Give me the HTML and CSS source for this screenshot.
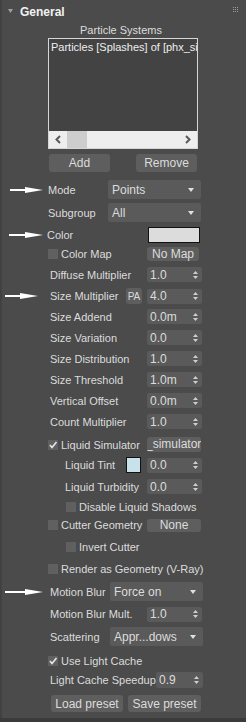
FILE: index.html
```html
<!DOCTYPE html>
<html lang="en">
<head>
  <meta charset="UTF-8">
  <title>General</title>
  <link rel="stylesheet" href="styles.css">
</head>
<body>

<div class="rollout">
  <div class="rollout-head">
    <svg class="caret" width="5" height="4" viewBox="0 0 5 4"><polygon points="0,0 5,0 2.5,4"/></svg>
    <span class="rollout-title">General</span>
    <svg class="grip" width="5" height="5" viewBox="0 0 5 5">
      <rect x="0" y="0" width="1" height="1"/><rect x="2" y="0" width="1" height="1"/><rect x="4" y="0" width="1" height="1"/>
      <rect x="0" y="2" width="1" height="1"/><rect x="2" y="2" width="1" height="1"/><rect x="4" y="2" width="1" height="1"/>
      <rect x="0" y="4" width="1" height="1"/><rect x="2" y="4" width="1" height="1"/><rect x="4" y="4" width="1" height="1"/>
    </svg>
  </div>

  <div class="caption">Particle Systems</div>
  <div class="listbox">
    <div class="list-items">
      <div class="list-item">Particles [Splashes] of [phx_simulator]</div>
    </div>
    <div class="hscroll">
      <svg class="chev" width="6" height="9" viewBox="0 0 6 9"><polyline points="5,1 1.5,4.5 5,8"/></svg>
      <span class="thumb"></span>
      <svg class="chev chev-right" width="6" height="9" viewBox="0 0 6 9"><polyline points="1,1 4.5,4.5 1,8"/></svg>
    </div>
  </div>

  <div class="btn-pair">
    <button class="btn">Add</button>
    <button class="btn btn-remove">Remove</button>
  </div>

  <div class="row tall m8">
    <svg class="pointer pointer-mode" width="33" height="8" viewBox="0 0 33 8"><rect x="0" y="3" width="17" height="2"/><polygon points="15,1 33,4 15,7"/></svg>
    <span class="lbl lbl-drop">Mode</span>
    <div class="drop">Points<svg class="drop-arrow" width="6" height="4" viewBox="0 0 6 4"><polygon points="0,0 6,0 3,4"/></svg></div>
  </div>
  <div class="row tall m4">
    <span class="lbl lbl-drop">Subgroup</span>
    <div class="drop">All<svg class="drop-arrow" width="6" height="4" viewBox="0 0 6 4"><polygon points="0,0 6,0 3,4"/></svg></div>
  </div>
  <div class="row h16 m5">
    <svg class="pointer pointer-color" width="34" height="8" viewBox="0 0 34 8"><rect x="0" y="3" width="18" height="2"/><polygon points="16,1 34,4 16,7"/></svg>
    <span class="lbl lbl-color">Color</span>
    <span class="swatch"></span>
  </div>
  <div class="row h14 m4">
    <span class="check"></span>
    <span class="lbl lbl-check">Color Map</span>
    <button class="btn btn-map">No Map</button>
  </div>
  <div class="row">
    <span class="lbl">Diffuse Multiplier</span>
    <div class="spin">1.0<svg class="spin-arrows" width="5" height="8" viewBox="0 0 5 8"><polygon points="0,3 2.5,0 5,3"/><polygon points="0,5 2.5,8 5,5"/></svg></div>
  </div>
  <div class="row h16">
    <svg class="pointer pointer-size" width="33" height="8" viewBox="0 0 33 8"><rect x="0" y="3" width="17" height="2"/><polygon points="15,1 33,4 15,7"/></svg>
    <span class="lbl lbl-pa">Size Multiplier</span>
    <button class="btn btn-pa">PA</button>
    <div class="spin">4.0<svg class="spin-arrows" width="5" height="8" viewBox="0 0 5 8"><polygon points="0,3 2.5,0 5,3"/><polygon points="0,5 2.5,8 5,5"/></svg></div>
  </div>
  <div class="row m5">
    <span class="lbl">Size Addend</span>
    <div class="spin">0.0m<svg class="spin-arrows" width="5" height="8" viewBox="0 0 5 8"><polygon points="0,3 2.5,0 5,3"/><polygon points="0,5 2.5,8 5,5"/></svg></div>
  </div>
  <div class="row">
    <span class="lbl">Size Variation</span>
    <div class="spin">0.0<svg class="spin-arrows" width="5" height="8" viewBox="0 0 5 8"><polygon points="0,3 2.5,0 5,3"/><polygon points="0,5 2.5,8 5,5"/></svg></div>
  </div>
  <div class="row">
    <span class="lbl">Size Distribution</span>
    <div class="spin">1.0<svg class="spin-arrows" width="5" height="8" viewBox="0 0 5 8"><polygon points="0,3 2.5,0 5,3"/><polygon points="0,5 2.5,8 5,5"/></svg></div>
  </div>
  <div class="row">
    <span class="lbl">Size Threshold</span>
    <div class="spin">1.0m<svg class="spin-arrows" width="5" height="8" viewBox="0 0 5 8"><polygon points="0,3 2.5,0 5,3"/><polygon points="0,5 2.5,8 5,5"/></svg></div>
  </div>
  <div class="row">
    <span class="lbl">Vertical Offset</span>
    <div class="spin">0.0m<svg class="spin-arrows" width="5" height="8" viewBox="0 0 5 8"><polygon points="0,3 2.5,0 5,3"/><polygon points="0,5 2.5,8 5,5"/></svg></div>
  </div>
  <div class="row">
    <span class="lbl">Count Multiplier</span>
    <div class="spin">1.0<svg class="spin-arrows" width="5" height="8" viewBox="0 0 5 8"><polygon points="0,3 2.5,0 5,3"/><polygon points="0,5 2.5,8 5,5"/></svg></div>
  </div>
  <div class="row m8">
    <span class="check checked"><svg width="10" height="10" viewBox="0 0 10 10"><polyline points="2,5 4,7.5 8.5,2"/></svg></span>
    <span class="lbl lbl-check">Liquid Simulator</span>
    <button class="btn btn-sim"><span>x_simulator_</span></button>
  </div>
  <div class="row h16 m5 indent-label">
    <span class="lbl lbl-tint">Liquid Tint</span>
    <span class="swatch swatch-tint"></span>
    <div class="spin">0.0<svg class="spin-arrows" width="5" height="8" viewBox="0 0 5 8"><polygon points="0,3 2.5,0 5,3"/><polygon points="0,5 2.5,8 5,5"/></svg></div>
  </div>
  <div class="row indent-label">
    <span class="lbl lbl-turb">Liquid Turbidity</span>
    <div class="spin">0.0<svg class="spin-arrows" width="5" height="8" viewBox="0 0 5 8"><polygon points="0,3 2.5,0 5,3"/><polygon points="0,5 2.5,8 5,5"/></svg></div>
  </div>
  <div class="row h14 indent">
    <span class="check"></span>
    <span class="lbl lbl-check">Disable Liquid Shadows</span>
  </div>
  <div class="row h14 m4">
    <span class="check"></span>
    <span class="lbl lbl-check">Cutter Geometry</span>
    <button class="btn btn-none">None</button>
  </div>
  <div class="row h14 m8 indent">
    <span class="check"></span>
    <span class="lbl lbl-check">Invert Cutter</span>
  </div>
  <div class="row h14 m8">
    <span class="check"></span>
    <span class="lbl lbl-check">Render as Geometry (V-Ray)</span>
  </div>
  <div class="row tall">
    <svg class="pointer pointer-blur" width="38" height="8" viewBox="0 0 38 8"><rect x="0" y="3" width="22" height="2"/><polygon points="20,1 38,4 20,7"/></svg>
    <span class="lbl lbl-drop2">Motion Blur</span>
    <div class="drop">Force on<svg class="drop-arrow" width="6" height="4" viewBox="0 0 6 4"><polygon points="0,0 6,0 3,4"/></svg></div>
  </div>
  <div class="row h16 m5">
    <span class="lbl">Motion Blur Mult.</span>
    <div class="spin">1.0<svg class="spin-arrows" width="5" height="8" viewBox="0 0 5 8"><polygon points="0,3 2.5,0 5,3"/><polygon points="0,5 2.5,8 5,5"/></svg></div>
  </div>
  <div class="row tall m5">
    <span class="lbl lbl-drop2">Scattering</span>
    <div class="drop">Appr...dows<svg class="drop-arrow" width="6" height="4" viewBox="0 0 6 4"><polygon points="0,0 6,0 3,4"/></svg></div>
  </div>
  <div class="row h14 m8">
    <span class="check checked"><svg width="10" height="10" viewBox="0 0 10 10"><polyline points="2,5 4,7.5 8.5,2"/></svg></span>
    <span class="lbl lbl-check">Use Light Cache</span>
  </div>
  <div class="row h16 m4">
    <span class="lbl lbl-lcs">Light Cache Speedup</span>
    <div class="spin spin-lcs">0.9<svg class="spin-arrows" width="5" height="8" viewBox="0 0 5 8"><polygon points="0,3 2.5,0 5,3"/><polygon points="0,5 2.5,8 5,5"/></svg></div>
  </div>
  <div class="presets">
    <button class="btn btn-preset">Load preset</button>
    <button class="btn btn-preset btn-save">Save preset</button>
  </div>
</div>

</body>
</html>
```

FILE: styles.css
```css
body {
  margin: 0;
  background: #3b3b3b;
  font-family: "Liberation Sans", Arial, sans-serif;
  font-size: 11px;
  color: #dcdcdc;
}

.rollout {
  width: 246px;
  height: 718px;
  background: #4b4b4b;
  box-shadow: inset 2px 0 #414141;
}

.rollout-head {
  display: flex;
  align-items: center;
  height: 23px;
  padding-left: 8px;
}
.caret {
  fill: #a0a0a0;
  margin-top: -2px;
}
.rollout-title {
  margin-left: 7px;
  font-weight: bold;
  font-size: 12px;
  color: #f2f2f2;
}
.grip {
  fill: #9c9c9c;
  margin-left: auto;
  margin-right: 8px;
  margin-top: -4px;
}

.caption {
  height: 15px;
  line-height: 15px;
  text-align: center;
  padding-right: 4px;
}

.listbox {
  margin-left: 48px;
  width: 150px;
  height: 111px;
  box-sizing: border-box;
  border: 1px solid #d6d6d6;
  background: #434343;
  display: flex;
  flex-direction: column;
}
.list-items {
  flex: 1;
  overflow: hidden;
  padding: 2px 2px 0;
}
.list-item {
  white-space: nowrap;
  line-height: 13px;
  color: #eeeeee;
}
.hscroll {
  height: 17px;
  background: #eeeeee;
  display: flex;
  align-items: center;
}
.chev {
  fill: none;
  stroke: #5a5a5a;
  stroke-width: 2;
  margin-left: 6px;
}
.chev-right {
  margin-left: auto;
  margin-right: 6px;
}
.thumb {
  width: 20px;
  height: 100%;
  margin-left: 6px;
  background: #cdcdcd;
}

.btn {
  border: none;
  border-radius: 3px;
  background: #5e5e5e;
  color: #dcdcdc;
  font: inherit;
  padding: 0;
  text-align: center;
}
.btn-pair {
  display: flex;
  margin-top: 5px;
  padding-left: 49px;
}
.btn-pair .btn {
  width: 61px;
  height: 18px;
  font-size: 12px;
}
.btn-pair .btn-remove {
  margin-left: 26px;
}

.row {
  display: flex;
  align-items: center;
  position: relative;
  height: 15px;
  margin-top: 6px;
  padding-left: 48px;
}
.row.tall { height: 19px; }
.row.h16 { height: 16px; }
.row.h14 { height: 14px; }
.row.m4 { margin-top: 4px; }
.row.m5 { margin-top: 5px; }
.row.m8 { margin-top: 8px; }
.row.indent { padding-left: 66px; }
.row.indent-label { padding-left: 65px; }

.lbl {
  white-space: nowrap;
  width: 97px;
  margin-left: 2px;
  flex: none;
}
.lbl-drop { width: 60px; margin-left: 0; }
.lbl-drop2 { width: 60px; }
.lbl-color { width: 101px; margin-left: -1px; }
.lbl-check { width: 86px; margin-left: 3px; }
.lbl-pa { width: 76px; }
.lbl-tint { width: 61px; margin-left: 0; }
.lbl-turb { width: 82px; margin-left: 0; }
.lbl-lcs { width: 106px; }

.pointer {
  position: absolute;
  top: 50%;
  margin-top: -4px;
  fill: #ffffff;
}
.pointer-mode { left: 10px; }
.pointer-color { left: 9px; }
.pointer-size { left: 5px; }
.pointer-blur { left: 5px; }

.drop {
  display: flex;
  align-items: center;
  width: 93px;
  height: 19px;
  box-sizing: border-box;
  padding-left: 4px;
  background: #5a5a5a;
  border-radius: 2px;
  font-size: 12px;
}
.drop-arrow {
  fill: #e0e0e0;
  margin-left: auto;
  margin-right: 7px;
}

.spin {
  display: flex;
  align-items: center;
  width: 55px;
  height: 15px;
  box-sizing: border-box;
  padding-left: 3px;
  background: #5a5a5a;
  border-radius: 2px;
  font-size: 12px;
}
.spin-lcs {
  width: 47px;
  height: 16px;
}
.spin-arrows {
  fill: #cfcfcf;
  margin-left: auto;
  margin-right: 4px;
}

.swatch {
  width: 52px;
  height: 16px;
  box-sizing: border-box;
  border: 1px solid #111111;
  background: #dcdcdc;
}
.swatch-tint {
  width: 15px;
  background: #c7e2ea;
  margin-right: 6px;
}

.check {
  flex: none;
  width: 10px;
  height: 10px;
  background: #606060;
}
.check svg {
  display: block;
  fill: none;
  stroke: #e8e8e8;
  stroke-width: 1.6;
}

.btn-map {
  width: 52px;
  height: 14px;
  font-size: 12px;
  line-height: 14px;
}
.btn-none {
  width: 54px;
  height: 13px;
  font-size: 12px;
  line-height: 13px;
}
.btn-pa {
  width: 16px;
  height: 16px;
  margin-right: 5px;
  font-size: 10px;
}
.btn-sim {
  width: 54px;
  height: 15px;
  overflow: hidden;
  display: flex;
  justify-content: center;
  font-size: 12px;
  line-height: 15px;
}
.btn-sim span {
  white-space: nowrap;
}

.presets {
  display: flex;
  margin-top: 7px;
  padding-left: 51px;
}
.btn-preset {
  width: 72px;
  height: 17px;
  font-size: 12px;
}
.btn-save {
  width: 73px;
  margin-left: 5px;
}
```
